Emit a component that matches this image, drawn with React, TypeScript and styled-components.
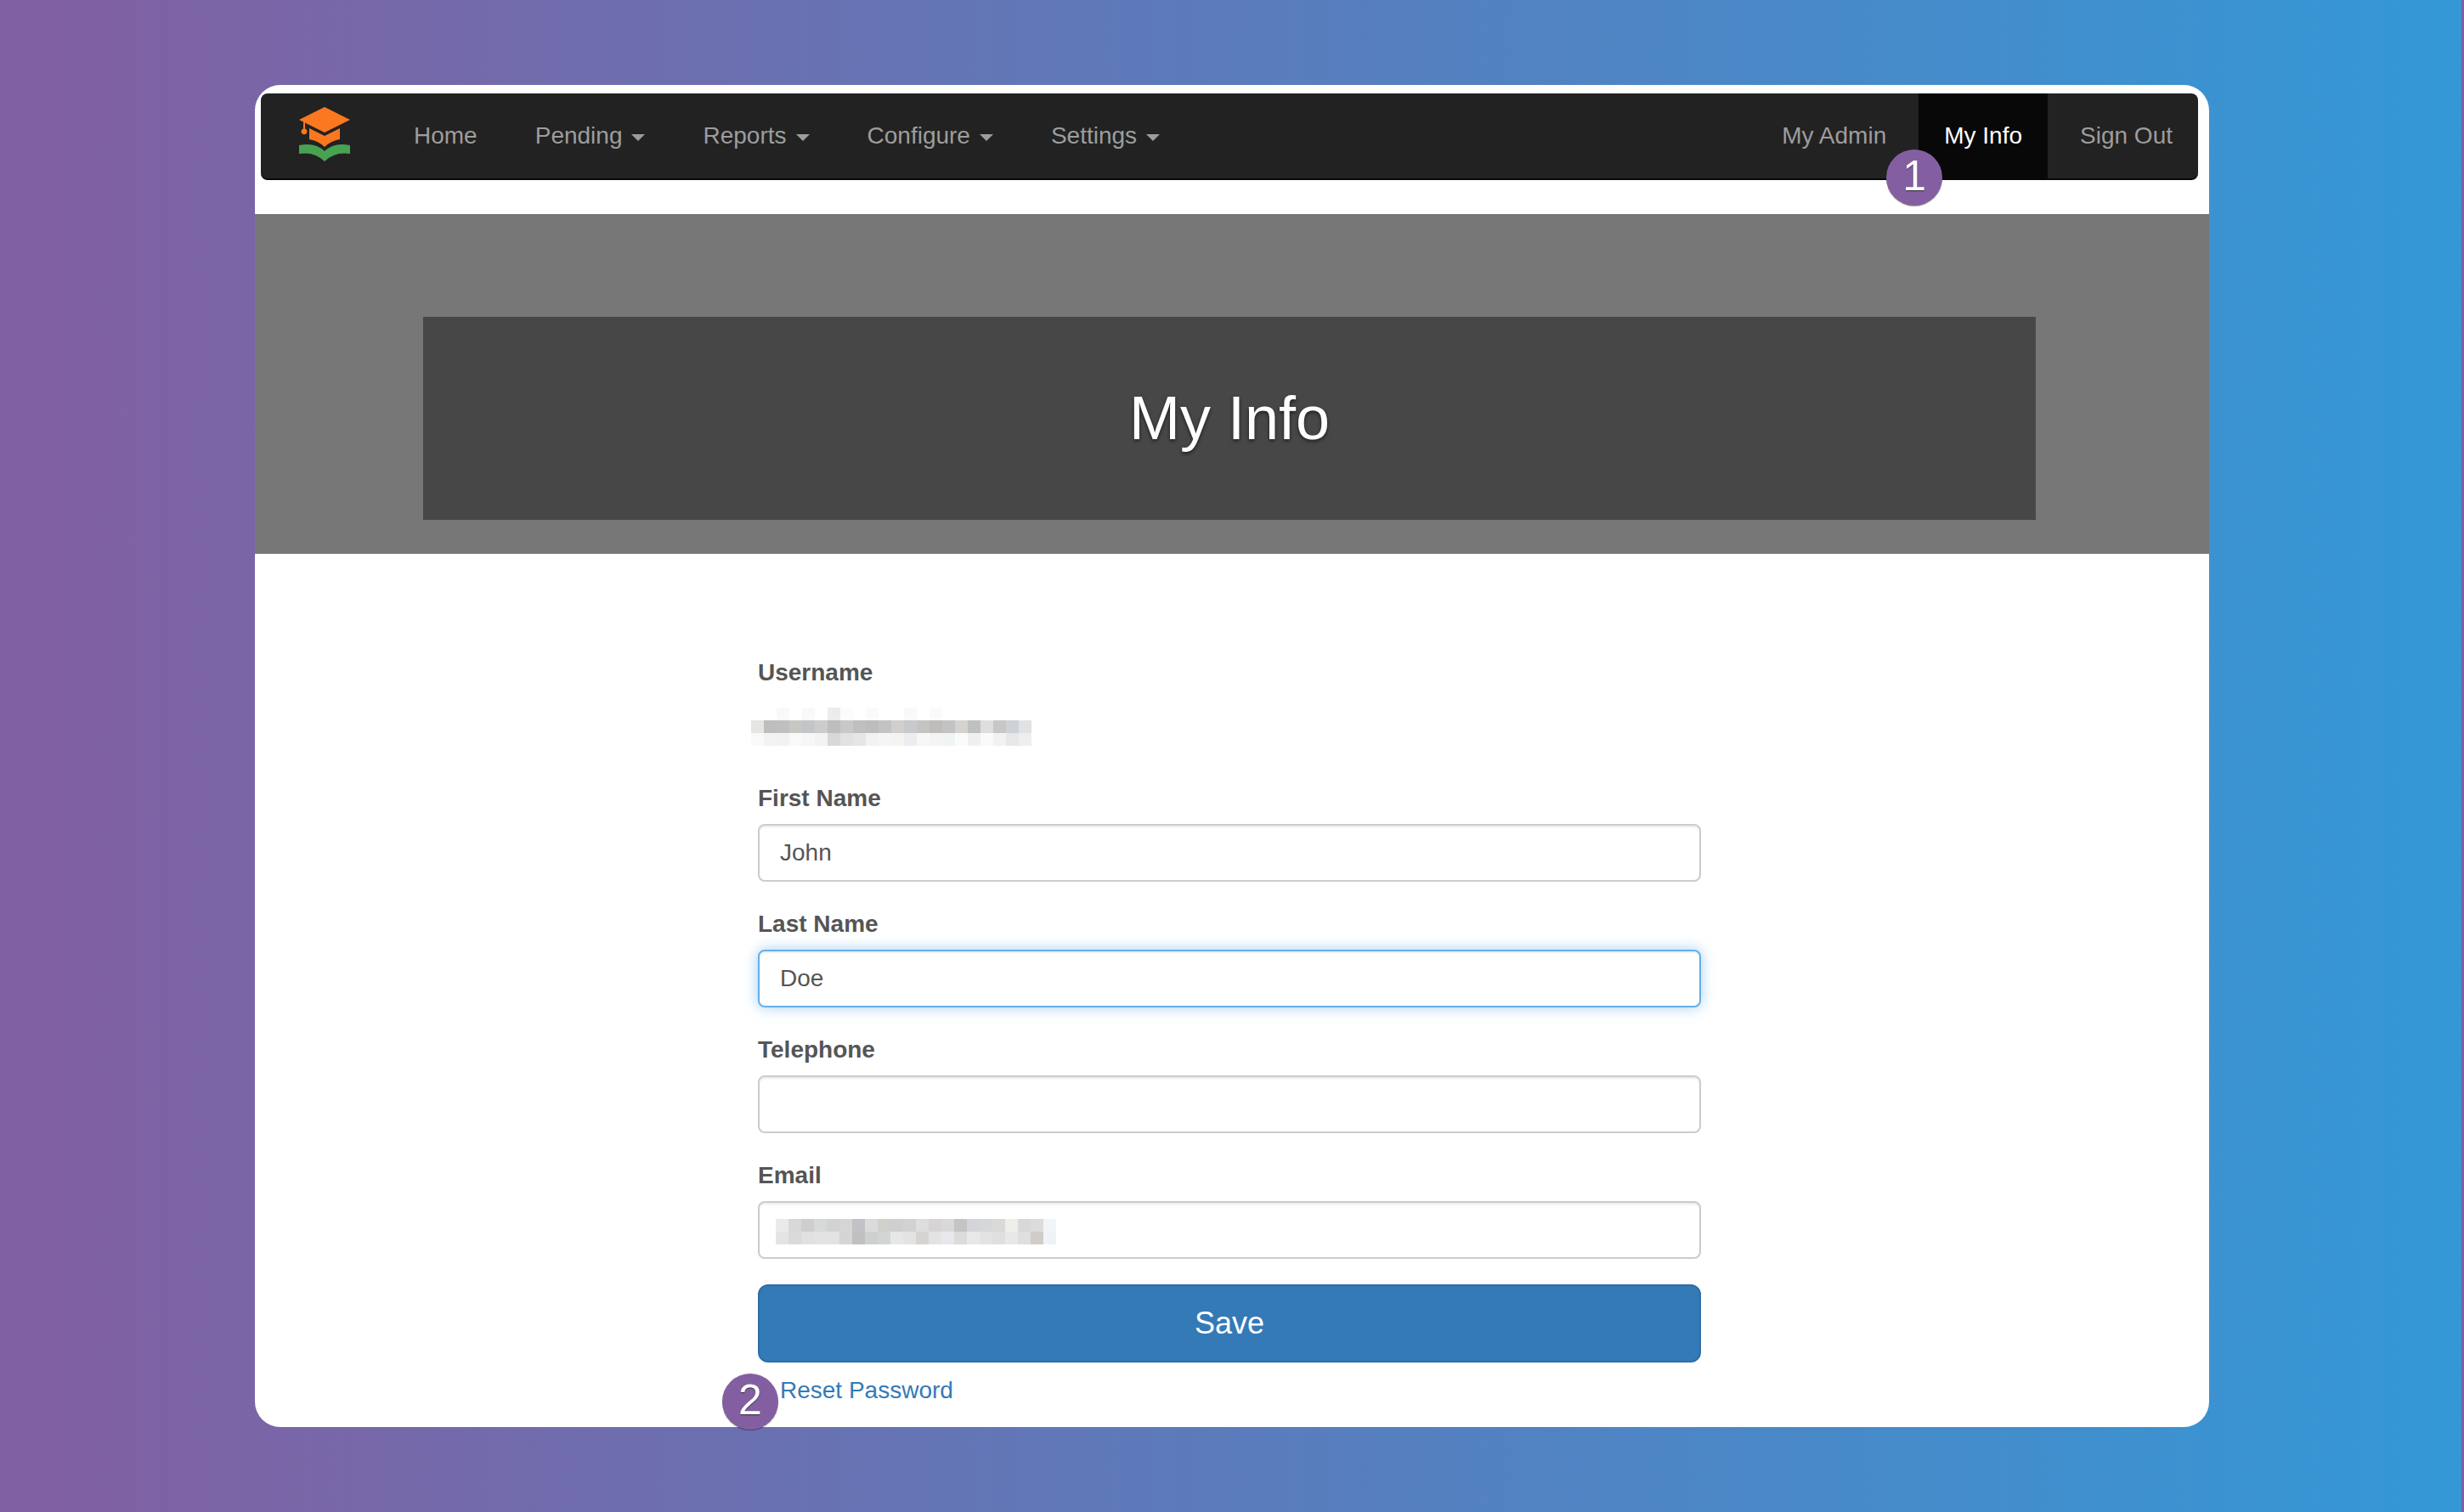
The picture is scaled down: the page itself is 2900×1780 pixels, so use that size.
import React from "react";
import styled, { createGlobalStyle, css } from "styled-components";

const GlobalStyle = createGlobalStyle`
  *, *::before, *::after { box-sizing: border-box; }
  body {
    margin: 0;
    color: #555;
    font: 28px/40px "Liberation Sans", Arial, Helvetica, sans-serif;
  }
`;

const Page = styled.div`
  min-height: 100vh;
  padding: 100px 300px;
  background: linear-gradient(90deg, #825fa1, #3498d6) 0 0 / calc(100% - 3px) 100%;
`;

const Card = styled.div`
  padding: 10px 0 23px;
  border-radius: 30px;
  background: #fff;
`;

const Navbar = styled.nav`
  display: flex;
  align-items: stretch;
  margin: 0 13px 40px 7px;
  border-bottom: 2px solid #080808;
  border-radius: 8px;
  background: #222;
`;

const Brand = styled.a`
  display: flex;
  align-items: center;
  padding: 0 44px 4px;
  svg { display: block; }
`;

const NavList = styled.ul<{ $right?: boolean }>`
  display: flex;
  gap: 8px;
  margin: 0;
  margin-left: ${(p) => (p.$right ? "auto" : "0")};
  padding: 0;
  list-style: none;
`;

const NavItem = styled.li`
  position: relative;
`;

const navEntry = css`
  display: flex;
  align-items: center;
  padding: 30px;
  border: 0;
  color: #9d9d9d;
  font: inherit;
  text-decoration: none;
  white-space: nowrap;
  cursor: pointer;
  &:hover { color: #fff; }
`;

const NavLink = styled.a<{ $active?: boolean }>`
  ${navEntry}
  ${(p) => p.$active && css`
    margin-bottom: -2px;
    padding-bottom: 32px;
    background: #080808;
    color: #fff;
  `}
`;

const NavMenu = styled.button`
  ${navEntry}
  background: none;
  &::after {
    content: "";
    margin: 4px 0 0 11px;
    border-top: 8px solid;
    border-right: 8px solid transparent;
    border-left: 8px solid transparent;
  }
`;

const Badge = styled.span<{ $left: number; $top: number }>`
  position: absolute;
  z-index: 1;
  left: ${(p) => p.$left}px;
  top: ${(p) => p.$top}px;
  width: 66px;
  height: 66px;
  border-radius: 50%;
  background: #835fa1;
  box-shadow: 0 1px 1px rgba(0, 0, 0, 0.4);
  color: #fff;
  font-size: 50px;
  line-height: 62px;
  text-align: center;
  text-shadow: 0 1px 1px rgba(0, 0, 0, 0.6);
`;

const Hero = styled.header`
  padding: 121px 204px 40px 198px;
  background: #777;
`;

const Title = styled.h1`
  margin: 0;
  padding: 80px 0;
  background: #474747;
  color: #fff;
  font-size: 72px;
  font-weight: 400;
  line-height: 79px;
  text-align: center;
  text-shadow: 0 2px 4px rgba(0, 0, 0, 0.6);
`;

const Main = styled.main`
  padding: 120px 6px 0 0;
`;

const Form = styled.form`
  display: flex;
  flex-direction: column;
  gap: 30px;
  max-width: 1110px;
  margin: 0 auto;
`;

const Field = styled.div`
  display: flex;
  flex-direction: column;
  gap: 10px;
`;

const Label = styled.label`
  font-weight: 700;
`;

const Caption = styled.span`
  font-weight: 700;
`;

const InputBox = styled.div`
  position: relative;
  display: flex;
`;

const Input = styled.input<{ $focused?: boolean }>`
  width: 100%;
  height: 68px;
  padding: 12px 24px;
  border: 2px solid ${(p) => (p.$focused ? "#66afe9" : "#ccc")};
  border-radius: 8px;
  outline: 0;
  background: #fff;
  box-shadow: inset 0 2px 2px rgba(0, 0, 0, 0.075)
    ${(p) => p.$focused && ", 0 0 16px rgba(102, 175, 233, 0.6)"};
  color: #555;
  font: inherit;
`;

const StaticValue = styled.div`
  margin-left: -8px;
  padding: 11px 0 12px;
  svg { display: block; }
`;

const InsetValue = styled.span`
  position: absolute;
  left: 21px;
  top: 21px;
  pointer-events: none;
  svg { display: block; }
`;

const SaveButton = styled.button`
  padding: 20px 32px;
  border: 2px solid #2e6da4;
  border-radius: 12px;
  background: #337ab7;
  color: #fff;
  font: inherit;
  font-size: 36px;
  line-height: 48px;
  cursor: pointer;
`;

const Footer = styled.div`
  position: relative;
  max-width: 1110px;
  margin: 13px auto 0;
  padding: 0 26px;
`;

const ResetLink = styled.a`
  color: #337ab7;
  text-decoration: none;
`;

const CELL = 15;

const USERNAME_CELLS = [
  "fff fff f9f9f9 fff f9f9f9 fff ececeb fcfcfc fff fafafa fff fff f9f9f9 fff fafafa fff fff fff fff fff fff fff",
  "e6e5e3 bebebe c0c0c1 c9c7c4 c3c5c8 cccccc bcbfbe c8c8c8 c0bfbd bdbdbd c3c3c3 d0cfcd c8c9cc c4c4c4 bfbdbc c3c3c3 d4d3cf bfc1c0 dedede c9c7c5 cdd2d6 e0e2e4",
  "f9f9f9 f3f3f3 f2f2f2 f9f9f9 f7f7f7 f5f3f1 d8d8d8 e2e2e2 e4e7e6 f2f2f2 f5f5f5 f4f4f2 ecedf0 f7f7f7 f5f4f3 f1f4f4 fbfbfb f0f0f0 fafafa f2f2f2 e8e7e7 edeef0",
];

const EMAIL_CELLS = [
  "ebeae9 d8d8d8 cecece d6d9d8 d2d2d2 d7d5d3 c1c3c6 dbdbdb d1d0cd cecfd1 d2d2d2 dedede d7d4d3 d7dad9 c4c4c4 d4d5d9 d5d8d8 dadad8 eeeeeb d8d8d8 dddcdb f1f5f8",
  "e4e4e4 dadada e1e1e1 e3e3e3 e3e3e3 d7d5d3 bfc1c0 cdd0cf d2d5d4 e5e8e7 e3e3e3 d6d4d2 e3e3e3 e6e8eb dbdbdb e8e8e8 e3e3e3 dfdfdf e8e8e8 dfdfdf d0ccc9 eff3f7",
];

function Mosaic({ rows, label }: { rows: string[]; label: string }) {
  const grid = rows.map((row) => row.split(" "));
  const width = grid[0].length * CELL;
  const height = grid.length * CELL;
  return (
    <svg width={width} height={height} role="img" aria-label={label} shapeRendering="crispEdges">
      {grid.map((cells, y) =>
        cells.map((color, x) => (
          <rect key={`${x}-${y}`} x={x * CELL} y={y * CELL} width={CELL} height={CELL} fill={`#${color}`} />
        ))
      )}
    </svg>
  );
}

function Logo() {
  return (
    <svg width="62" height="64" viewBox="0 0 62 64" aria-hidden="true">
      <g fill="#f97820">
        <path d="M31 0 61 15 31 30 1 15Z" />
        <path d="M6 16h2v9.500a3.500 3.500 0 1 1-2 0Z" />
        <path d="M13 25 31 34 49 25V38Q38 40 31 47Q24 40 13 38Z" />
      </g>
      <path fill="#47a352" d="M1 45Q20 41 31 52Q42 41 61 45V55Q43 52 31 64Q19 52 1 55Z" />
    </svg>
  );
}

const MENUS = ["Pending", "Reports", "Configure", "Settings"];

export default function App() {
  return (
    <>
      <GlobalStyle />
      <Page>
        <Card>
          <Navbar>
            <Brand href="#" aria-label="Dashboard">
              <Logo />
            </Brand>
            <NavList>
              <NavItem><NavLink href="#">Home</NavLink></NavItem>
              {MENUS.map((name) => (
                <NavItem key={name}>
                  <NavMenu type="button" aria-haspopup="true">{name}</NavMenu>
                </NavItem>
              ))}
            </NavList>
            <NavList $right>
              <NavItem><NavLink href="#">My Admin</NavLink></NavItem>
              <NavItem>
                <NavLink href="#" $active aria-current="page">My Info</NavLink>
                <Badge $left={-38} $top={66}>1</Badge>
              </NavItem>
              <NavItem><NavLink href="#">Sign Out</NavLink></NavItem>
            </NavList>
          </Navbar>

          <Hero>
            <Title>My Info</Title>
          </Hero>

          <Main>
            <Form onSubmit={(e) => e.preventDefault()}>
              <Field>
                <Caption>Username</Caption>
                <StaticValue><Mosaic rows={USERNAME_CELLS} label="Hidden username" /></StaticValue>
              </Field>
              <Field>
                <Label htmlFor="first-name">First Name</Label>
                <Input id="first-name" type="text" defaultValue="John" />
              </Field>
              <Field>
                <Label htmlFor="last-name">Last Name</Label>
                <Input id="last-name" type="text" defaultValue="Doe" $focused />
              </Field>
              <Field>
                <Label htmlFor="telephone">Telephone</Label>
                <Input id="telephone" type="tel" />
              </Field>
              <Field>
                <Label htmlFor="email">Email</Label>
                <InputBox>
                  <Input id="email" type="email" />
                  <InsetValue><Mosaic rows={EMAIL_CELLS} label="Hidden email" /></InsetValue>
                </InputBox>
              </Field>
              <SaveButton type="submit">Save</SaveButton>
            </Form>
            <Footer>
              <Badge $left={-42} $top={0}>2</Badge>
              <ResetLink href="#">Reset Password</ResetLink>
            </Footer>
          </Main>
        </Card>
      </Page>
    </>
  );
}
